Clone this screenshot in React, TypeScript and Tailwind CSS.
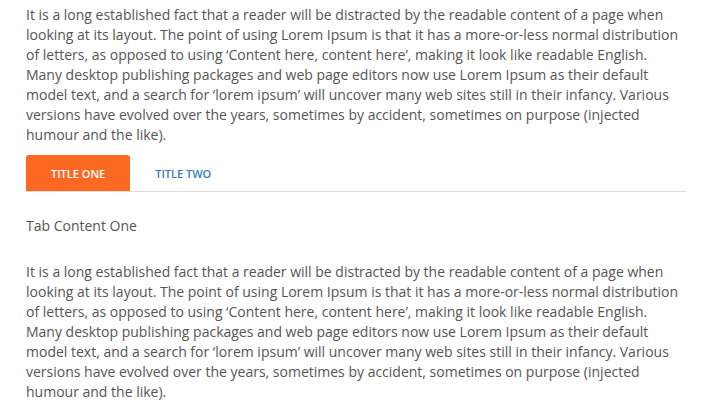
import React, { useState } from "react";

const LOREM =
  "It is a long established fact that a reader will be distracted by the readable content of a page when looking at its layout. The point of using Lorem Ipsum is that it has a more-or-less normal distribution of letters, as opposed to using \u2018Content here, content here\u2019, making it look like readable English. Many desktop publishing packages and web page editors now use Lorem Ipsum as their default model text, and a search for \u2018lorem ipsum\u2019 will uncover many web sites still in their infancy. Various versions have evolved over the years, sometimes by accident, sometimes on purpose (injected humour and the like).";

const tabs = [
  { id: "one", title: "Title One", content: "Tab Content One" },
  { id: "two", title: "Title Two", content: "Tab Content Two" },
];

const App = () => {
  const [active, setActive] = useState("one");
  const current = tabs.find(t => t.id === active)!;

  return (
    <div className="min-h-screen bg-white font-['Open_Sans',sans-serif] text-[14px] leading-[20px] text-[#555]">
      <div className="w-[660px] ml-[26px] pt-[5px]">
        <p>{LOREM}</p>

        <div className="mt-[10px] flex border-b border-[#ddd]">
          {tabs.map(tab => (
            <button
              key={tab.id}
              onClick={() => setActive(tab.id)}
              className={`h-[36px] px-[25px] rounded-t-[3px] text-[11px] font-semibold uppercase leading-none ${
                tab.id === active ? "bg-[#fd6923] text-white" : "bg-transparent text-[#2d7cbf]"
              }`}
            >
              {tab.title}
            </button>
          ))}
        </div>

        <p className="mt-[24px]">{current.content}</p>
        <p className="mt-[26px]">{LOREM}</p>
      </div>
    </div>
  );
};

export default App;
